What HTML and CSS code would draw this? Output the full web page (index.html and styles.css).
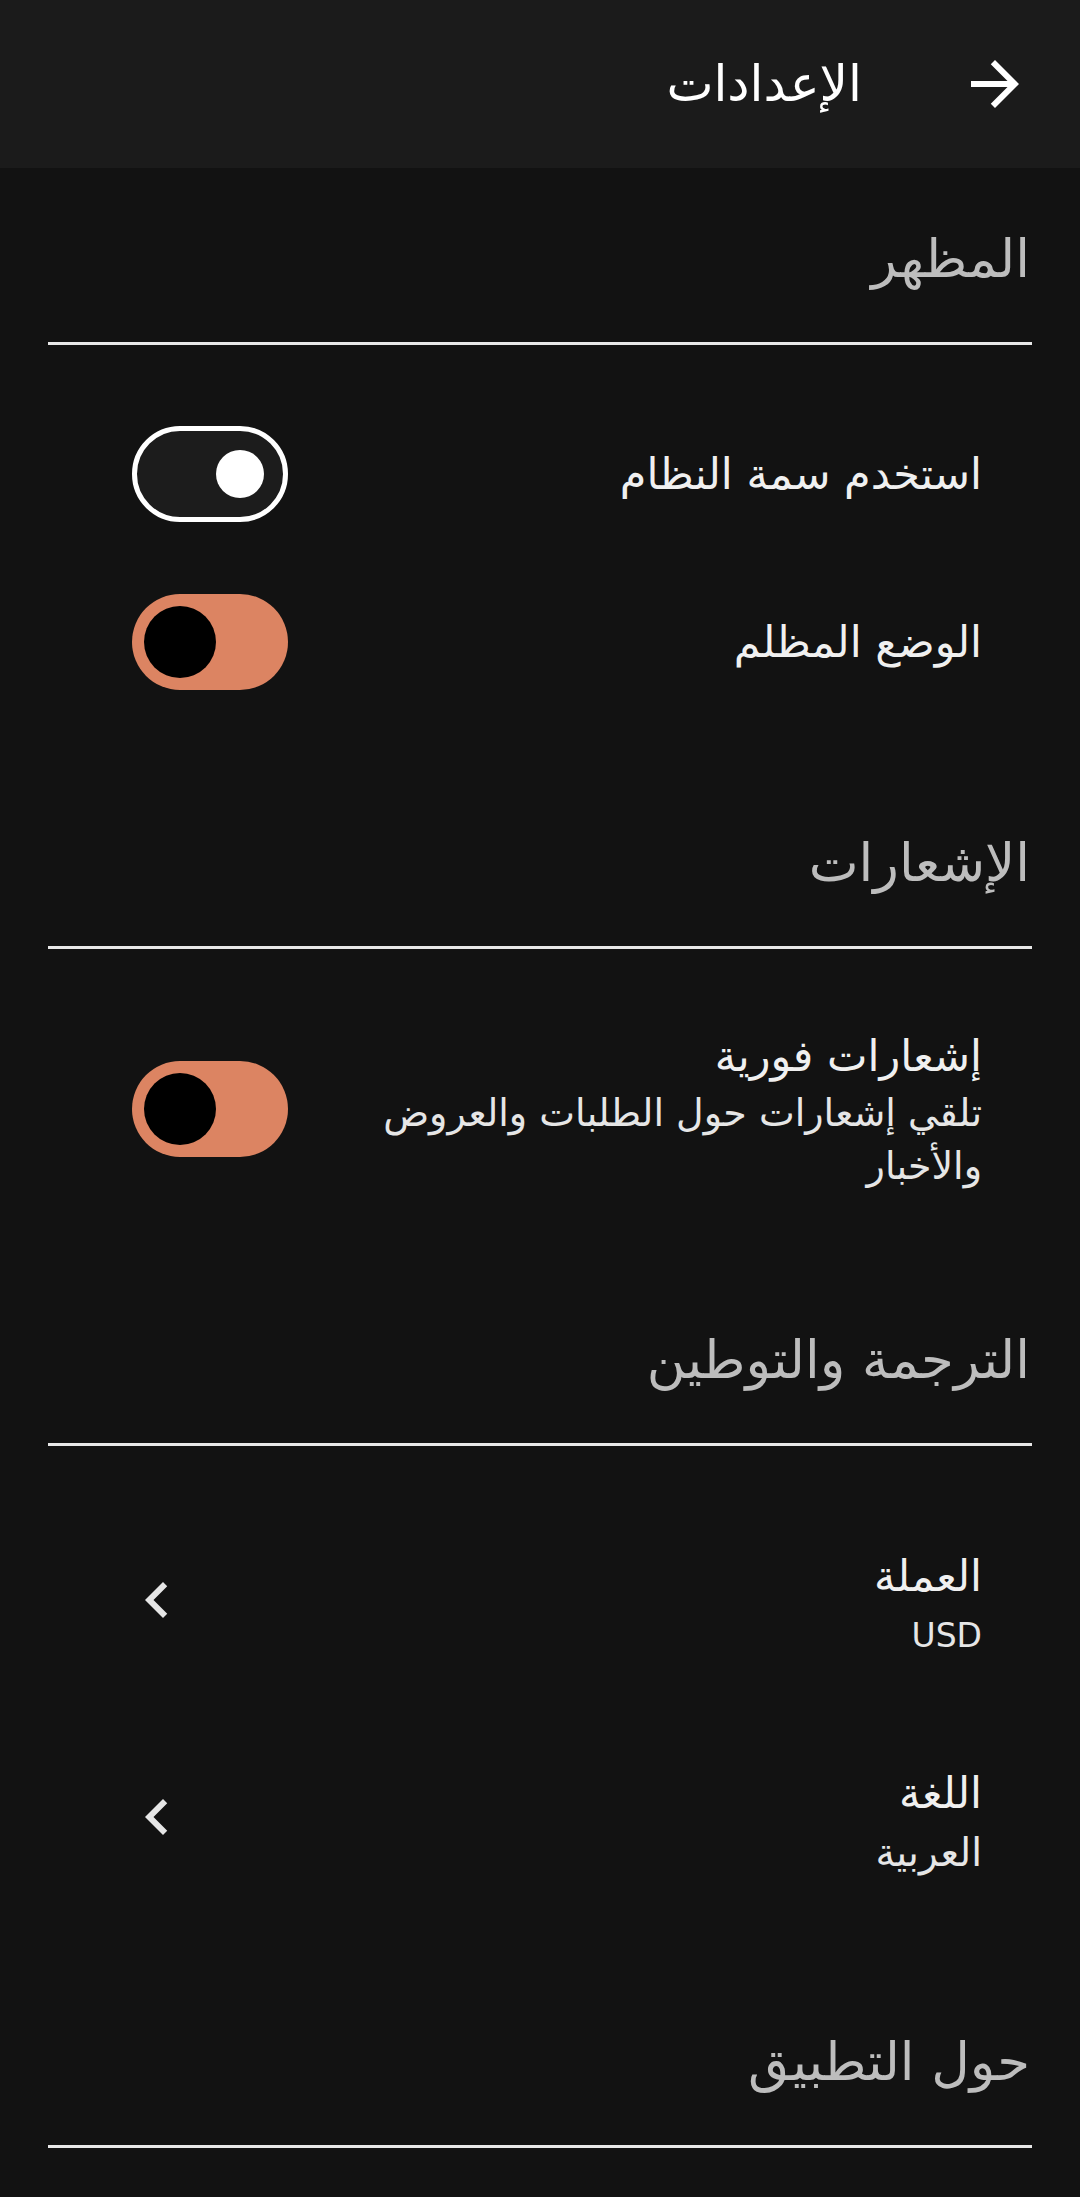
FILE: index.html
```html
<!DOCTYPE html>
<html lang="ar" dir="rtl">
<head>
<meta charset="utf-8">
<title>الإعدادات</title>
<link rel="stylesheet" href="styles.css">
</head>
<body>
<div class="app">
  <header class="topbar">
    <span class="back">
      <svg viewBox="0 0 24 24" width="72" height="72"><path d="M12 4l-1.41 1.41L16.17 11H4v2h12.17l-5.58 5.59L12 20l8-8z"/></svg>
    </span>
    <h1 class="title">الإعدادات</h1>
  </header>
  <main class="content">
    <section class="section first">
      <h2 class="section-title">المظهر</h2>
      <div class="divider"></div>
      <div class="items">
        <div class="row toggle-row">
          <div class="row-text"><div class="row-title">استخدم سمة النظام</div></div>
          <span class="switch off"><span class="knob"></span></span>
        </div>
        <div class="row toggle-row">
          <div class="row-text"><div class="row-title">الوضع المظلم</div></div>
          <span class="switch on"><span class="knob"></span></span>
        </div>
      </div>
    </section>
    <section class="section">
      <h2 class="section-title">الإشعارات</h2>
      <div class="divider"></div>
      <div class="items">
        <div class="row toggle-row tall">
          <div class="row-text narrow">
            <div class="row-title">إشعارات فورية</div>
            <div class="row-sub">تلقي إشعارات حول الطلبات والعروض والأخبار</div>
          </div>
          <span class="switch on"><span class="knob"></span></span>
        </div>
      </div>
    </section>
    <section class="section">
      <h2 class="section-title">الترجمة والتوطين</h2>
      <div class="divider"></div>
      <div class="items">
        <div class="row nav-row">
          <div class="row-text">
            <div class="row-title">العملة</div>
            <div class="row-value latin">USD</div>
          </div>
          <span class="chev"><svg viewBox="0 0 24 24" width="72" height="72"><path d="M15.41 7.41L14 6l-6 6 6 6 1.41-1.41L10.83 12z"/></svg></span>
        </div>
        <div class="row nav-row">
          <div class="row-text">
            <div class="row-title">اللغة</div>
            <div class="row-value">العربية</div>
          </div>
          <span class="chev"><svg viewBox="0 0 24 24" width="72" height="72"><path d="M15.41 7.41L14 6l-6 6 6 6 1.41-1.41L10.83 12z"/></svg></span>
        </div>
      </div>
    </section>
    <section class="section">
      <h2 class="section-title">حول التطبيق</h2>
      <div class="divider"></div>
    </section>
  </main>
</div>
</body>
</html>
```
FILE: styles.css
```css
* { box-sizing: border-box; }
html, body {
  margin: 0;
  padding: 0;
  background: #121212;
}
body {
  font-family: "DejaVu Sans", "Noto Sans", sans-serif;
  color: #ececec;
  direction: rtl;
}
.app {
  width: 1080px;
  min-height: 2197px;
  background: #121212;
  overflow: hidden;
}
.topbar {
  height: 168px;
  background: #1b1b1b;
  display: flex;
  align-items: center;
  padding-right: 49px;
  gap: 97px;
}
.back {
  width: 72px;
  height: 72px;
  display: flex;
}
.back svg { fill: #ffffff; }
.title {
  margin: 0;
  font-size: 50px;
  font-weight: 400;
  color: #ffffff;
  line-height: 72px;
}
.content {
  padding: 0 48px;
}
.section {
  padding-top: 97px;
}
.section.first {
  padding-top: 51px;
}
.section-title {
  margin: 0;
  height: 80px;
  line-height: 80px;
  font-size: 53px;
  font-weight: 400;
  color: #bdbdbd;
  padding-right: 2px;
}
.divider {
  margin-top: 43px;
  height: 3px;
  background: #e8e8e8;
}
.items {
  padding-top: 45px;
}
.row {
  display: flex;
  align-items: center;
  justify-content: space-between;
  padding-right: 50px;
}
.toggle-row {
  height: 168px;
  padding-left: 84px;
}
.toggle-row.tall {
  height: 229px;
}
.nav-row {
  height: 217px;
  padding-left: 73px;
}
.nav-row .row-text {
  padding-top: 10px;
}
.row-title {
  font-size: 43px;
  line-height: 62px;
  color: #f0f0f0;
}
.row-sub {
  font-size: 38px;
  line-height: 53px;
  color: #e6e6e6;
}
.row-text.narrow {
  max-width: 650px;
}
.row-value {
  font-size: 39px;
  line-height: 58px;
  color: #e6e6e6;
}
.row-value.latin {
  font-size: 33px;
}
.switch {
  position: relative;
  flex: none;
  width: 156px;
  height: 96px;
  border-radius: 48px;
}
.switch.off {
  background: #1c1c1c;
  border: 5px solid #ffffff;
}
.switch.on {
  background: #dc8462;
}
.knob {
  position: absolute;
  top: 50%;
  border-radius: 50%;
}
.switch.off .knob {
  width: 48px;
  height: 48px;
  margin-top: -24px;
  right: 19px;
  background: #ffffff;
}
.switch.on .knob {
  width: 72px;
  height: 72px;
  margin-top: -36px;
  left: 12px;
  background: #000000;
}
.chev {
  width: 72px;
  height: 72px;
  display: flex;
}
.chev svg { fill: #e6e6e6; }
```
